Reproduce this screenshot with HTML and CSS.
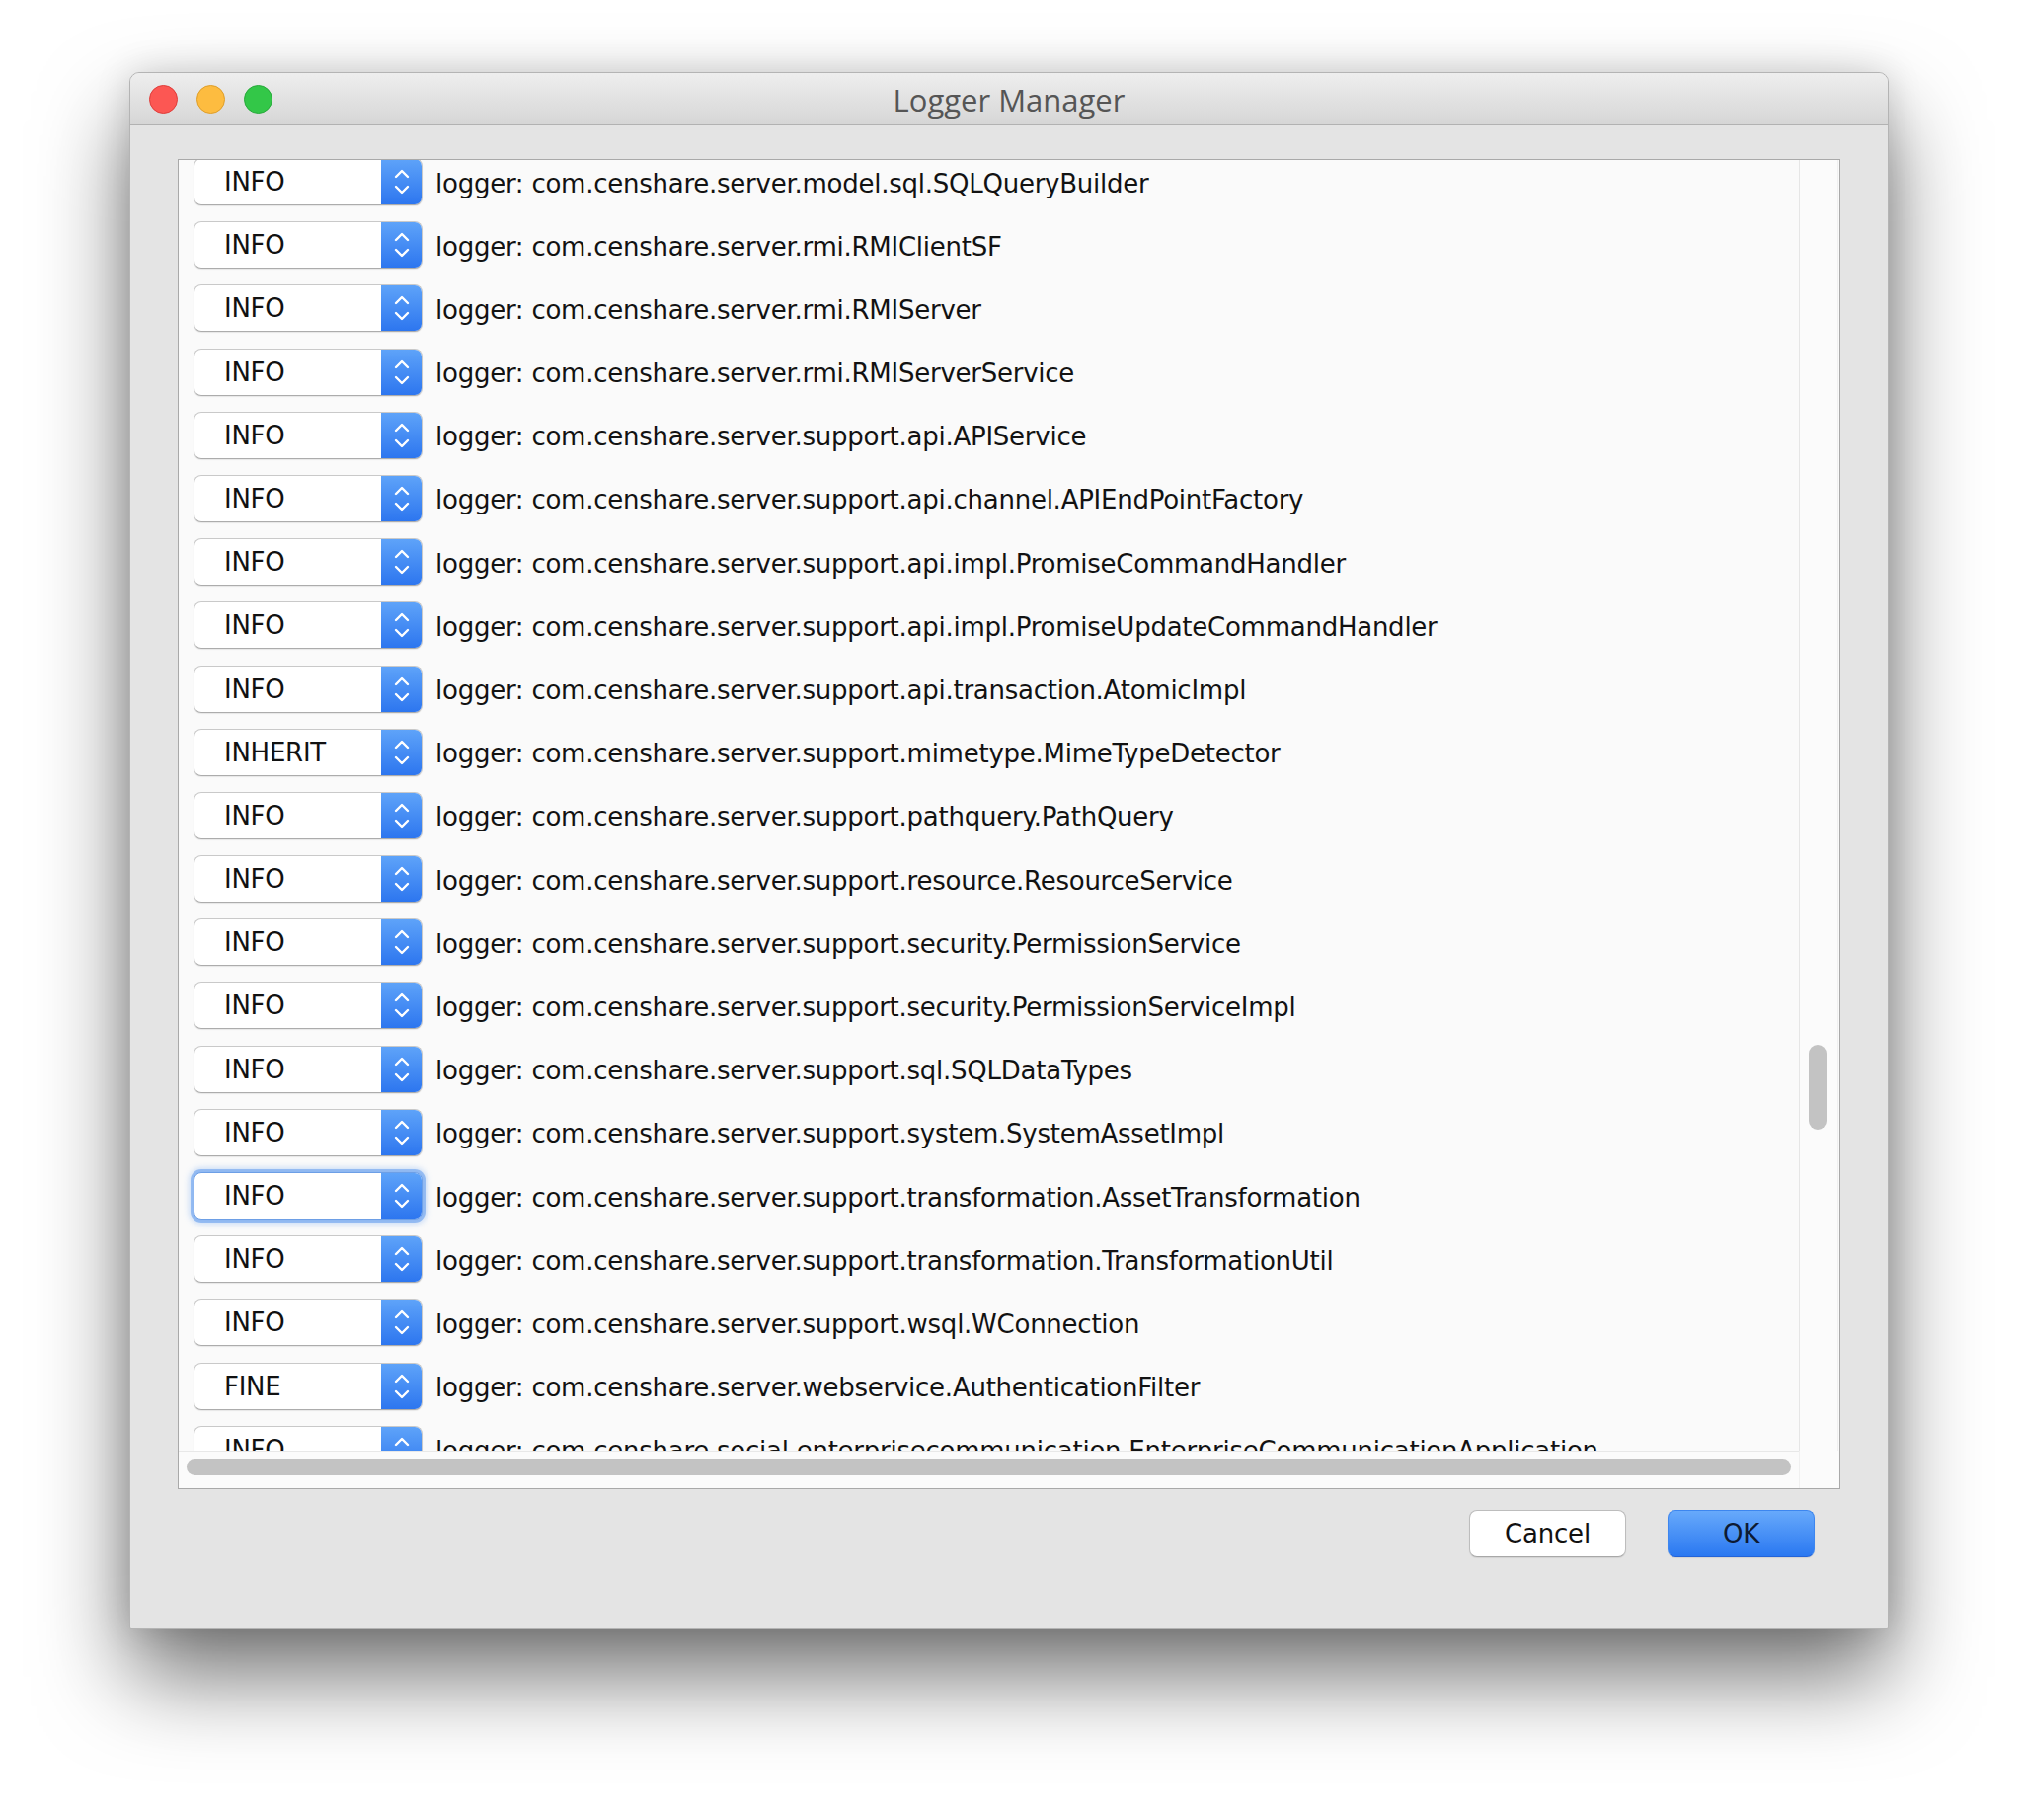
FILE: index.html
```html
<!DOCTYPE html>
<html>
<head>
<title>Logger Manager</title>
<link rel="stylesheet" href="styles.css">
</head>
<body>

<div class="window">
  <div class="titlebar">
    <div class="lights">
      <span class="light red"></span>
      <span class="light yellow"></span>
      <span class="light green"></span>
    </div>
    <div class="title">Logger Manager</div>
  </div>

  <div class="content">
    <div class="pane">
      <div class="viewport">
        <div class="list">
          <div class="row"><div class="combo"><span class="level">INFO</span><span class="arrows"><svg width="16" height="30" viewBox="0 0 16 30"><path d="M2 10 L8 4 L14 10 M2 20 L8 26 L14 20"/></svg></span></div><span class="name">logger: com.censhare.server.model.sql.SQLQueryBuilder</span></div>
          <div class="row"><div class="combo"><span class="level">INFO</span><span class="arrows"><svg width="16" height="30" viewBox="0 0 16 30"><path d="M2 10 L8 4 L14 10 M2 20 L8 26 L14 20"/></svg></span></div><span class="name">logger: com.censhare.server.rmi.RMIClientSF</span></div>
          <div class="row"><div class="combo"><span class="level">INFO</span><span class="arrows"><svg width="16" height="30" viewBox="0 0 16 30"><path d="M2 10 L8 4 L14 10 M2 20 L8 26 L14 20"/></svg></span></div><span class="name">logger: com.censhare.server.rmi.RMIServer</span></div>
          <div class="row"><div class="combo"><span class="level">INFO</span><span class="arrows"><svg width="16" height="30" viewBox="0 0 16 30"><path d="M2 10 L8 4 L14 10 M2 20 L8 26 L14 20"/></svg></span></div><span class="name">logger: com.censhare.server.rmi.RMIServerService</span></div>
          <div class="row"><div class="combo"><span class="level">INFO</span><span class="arrows"><svg width="16" height="30" viewBox="0 0 16 30"><path d="M2 10 L8 4 L14 10 M2 20 L8 26 L14 20"/></svg></span></div><span class="name">logger: com.censhare.server.support.api.APIService</span></div>
          <div class="row"><div class="combo"><span class="level">INFO</span><span class="arrows"><svg width="16" height="30" viewBox="0 0 16 30"><path d="M2 10 L8 4 L14 10 M2 20 L8 26 L14 20"/></svg></span></div><span class="name">logger: com.censhare.server.support.api.channel.APIEndPointFactory</span></div>
          <div class="row"><div class="combo"><span class="level">INFO</span><span class="arrows"><svg width="16" height="30" viewBox="0 0 16 30"><path d="M2 10 L8 4 L14 10 M2 20 L8 26 L14 20"/></svg></span></div><span class="name">logger: com.censhare.server.support.api.impl.PromiseCommandHandler</span></div>
          <div class="row"><div class="combo"><span class="level">INFO</span><span class="arrows"><svg width="16" height="30" viewBox="0 0 16 30"><path d="M2 10 L8 4 L14 10 M2 20 L8 26 L14 20"/></svg></span></div><span class="name">logger: com.censhare.server.support.api.impl.PromiseUpdateCommandHandler</span></div>
          <div class="row"><div class="combo"><span class="level">INFO</span><span class="arrows"><svg width="16" height="30" viewBox="0 0 16 30"><path d="M2 10 L8 4 L14 10 M2 20 L8 26 L14 20"/></svg></span></div><span class="name">logger: com.censhare.server.support.api.transaction.AtomicImpl</span></div>
          <div class="row"><div class="combo"><span class="level">INHERIT</span><span class="arrows"><svg width="16" height="30" viewBox="0 0 16 30"><path d="M2 10 L8 4 L14 10 M2 20 L8 26 L14 20"/></svg></span></div><span class="name">logger: com.censhare.server.support.mimetype.MimeTypeDetector</span></div>
          <div class="row"><div class="combo"><span class="level">INFO</span><span class="arrows"><svg width="16" height="30" viewBox="0 0 16 30"><path d="M2 10 L8 4 L14 10 M2 20 L8 26 L14 20"/></svg></span></div><span class="name">logger: com.censhare.server.support.pathquery.PathQuery</span></div>
          <div class="row"><div class="combo"><span class="level">INFO</span><span class="arrows"><svg width="16" height="30" viewBox="0 0 16 30"><path d="M2 10 L8 4 L14 10 M2 20 L8 26 L14 20"/></svg></span></div><span class="name">logger: com.censhare.server.support.resource.ResourceService</span></div>
          <div class="row"><div class="combo"><span class="level">INFO</span><span class="arrows"><svg width="16" height="30" viewBox="0 0 16 30"><path d="M2 10 L8 4 L14 10 M2 20 L8 26 L14 20"/></svg></span></div><span class="name">logger: com.censhare.server.support.security.PermissionService</span></div>
          <div class="row"><div class="combo"><span class="level">INFO</span><span class="arrows"><svg width="16" height="30" viewBox="0 0 16 30"><path d="M2 10 L8 4 L14 10 M2 20 L8 26 L14 20"/></svg></span></div><span class="name">logger: com.censhare.server.support.security.PermissionServiceImpl</span></div>
          <div class="row"><div class="combo"><span class="level">INFO</span><span class="arrows"><svg width="16" height="30" viewBox="0 0 16 30"><path d="M2 10 L8 4 L14 10 M2 20 L8 26 L14 20"/></svg></span></div><span class="name">logger: com.censhare.server.support.sql.SQLDataTypes</span></div>
          <div class="row"><div class="combo"><span class="level">INFO</span><span class="arrows"><svg width="16" height="30" viewBox="0 0 16 30"><path d="M2 10 L8 4 L14 10 M2 20 L8 26 L14 20"/></svg></span></div><span class="name">logger: com.censhare.server.support.system.SystemAssetImpl</span></div>
          <div class="row"><div class="combo focused"><span class="level">INFO</span><span class="arrows"><svg width="16" height="30" viewBox="0 0 16 30"><path d="M2 10 L8 4 L14 10 M2 20 L8 26 L14 20"/></svg></span></div><span class="name">logger: com.censhare.server.support.transformation.AssetTransformation</span></div>
          <div class="row"><div class="combo"><span class="level">INFO</span><span class="arrows"><svg width="16" height="30" viewBox="0 0 16 30"><path d="M2 10 L8 4 L14 10 M2 20 L8 26 L14 20"/></svg></span></div><span class="name">logger: com.censhare.server.support.transformation.TransformationUtil</span></div>
          <div class="row"><div class="combo"><span class="level">INFO</span><span class="arrows"><svg width="16" height="30" viewBox="0 0 16 30"><path d="M2 10 L8 4 L14 10 M2 20 L8 26 L14 20"/></svg></span></div><span class="name">logger: com.censhare.server.support.wsql.WConnection</span></div>
          <div class="row"><div class="combo"><span class="level">FINE</span><span class="arrows"><svg width="16" height="30" viewBox="0 0 16 30"><path d="M2 10 L8 4 L14 10 M2 20 L8 26 L14 20"/></svg></span></div><span class="name">logger: com.censhare.server.webservice.AuthenticationFilter</span></div>
          <div class="row"><div class="combo"><span class="level">INFO</span><span class="arrows"><svg width="16" height="30" viewBox="0 0 16 30"><path d="M2 10 L8 4 L14 10 M2 20 L8 26 L14 20"/></svg></span></div><span class="name">logger: com.censhare.social.enterprisecommunication.EnterpriseCommunicationApplication</span></div>
        </div>
      </div>
      <div class="vtrack"><div class="vthumb"></div></div>
      <div class="htrack"><div class="hthumb"></div></div>
      <div class="corner"></div>
    </div>

    <div class="buttons">
      <button class="btn">Cancel</button>
      <button class="btn default">OK</button>
    </div>
  </div>
</div>

</body>
</html>
```

FILE: styles.css
```css
* {
  box-sizing: border-box;
}

body {
  margin: 0;
  padding: 73px 0 0 131px;
  background-color: #fff;
  font-family: "DejaVu Sans", Verdana, sans-serif;
  height: 1843px;
  overflow: hidden;
}

.window {
  width: 1782px;
  height: 1577px;
  background-color: #e4e4e4;
  border: 1px solid #b4b4b4;
  border-radius: 10px 10px 2px 2px;
  box-shadow: 0 48px 90px rgba(0, 0, 0, 0.55), 0 0 36px rgba(0, 0, 0, 0.14);
}

.titlebar {
  position: relative;
  height: 53px;
  display: flex;
  align-items: center;
  justify-content: center;
  background: linear-gradient(#eeeeee, #d6d6d6);
  border-bottom: 1px solid #b2b2b2;
  border-radius: 9px 9px 0 0;
}

.lights {
  position: absolute;
  left: 19px;
  top: 12px;
  display: flex;
  gap: 19px;
}

.light {
  width: 29px;
  height: 29px;
  border-radius: 50%;
}

.red {
  background-color: #fc5753;
  border: 1px solid #df3d3a;
}

.yellow {
  background-color: #fdbc40;
  border: 1px solid #de9e2a;
}

.green {
  background-color: #33c748;
  border: 1px solid #27a93a;
}

.title {
  font-family: "Open Sans", "DejaVu Sans", sans-serif;
  font-size: 31px;
  color: #555;
  margin-top: 2px;
}

.content {
  padding: 34px 48px 0 48px;
}

.pane {
  height: 1347px;
  border: 1px solid #a9a9a9;
  background-color: #fafafa;
  display: grid;
  grid-template-columns: 1641px 40px;
  grid-template-rows: 1307px 38px;
}

.viewport {
  overflow: hidden;
  padding-left: 15px;
}

.list {
  margin-top: -2px;
}

.row {
  display: flex;
  align-items: center;
  height: 48px;
  margin-bottom: 16.2px;
  white-space: nowrap;
}

.combo {
  width: 232px;
  height: 48px;
  display: flex;
  flex-shrink: 0;
  background-color: #fff;
  border: 1px solid #c9c9c9;
  border-bottom-color: #acacac;
  border-radius: 8px;
  box-shadow: 0 1px 1px rgba(0, 0, 0, 0.08);
  overflow: hidden;
}

.combo.focused {
  border-color: #6d9fe6;
  box-shadow: 0 0 0 3px rgba(105, 160, 238, 0.6), 0 0 6px 4px rgba(110, 165, 240, 0.4);
}

.level {
  flex: 1;
  display: flex;
  align-items: center;
  padding-left: 30px;
  font-size: 26px;
  letter-spacing: -0.25px;
  color: #111;
}

.arrows {
  width: 41px;
  display: flex;
  align-items: center;
  justify-content: center;
  background: linear-gradient(#5ea3f9, #2d76ef);
}

.arrows path {
  fill: none;
  stroke: #fff;
  stroke-width: 2.4;
  stroke-linecap: round;
  stroke-linejoin: round;
}

.name {
  margin-left: 13px;
  padding-top: 3px;
  font-size: 26px;
  letter-spacing: -0.25px;
  color: #121212;
}

.vtrack {
  border-left: 1px solid #e6e6e6;
  border-right: 1px solid #f0f0f0;
  background-color: #fbfbfb;
  padding: 896px 0 0 9px;
}

.vthumb {
  width: 18px;
  height: 86px;
  border-radius: 9px;
  background-color: #c3c3c3;
}

.htrack {
  border-top: 1px solid #e8e8e8;
  background-color: #fbfbfb;
  padding: 7px 0 0 8px;
}

.hthumb {
  width: 1625px;
  height: 17px;
  border-radius: 9px;
  background-color: #c3c3c3;
}

.corner {
  background-color: #fbfbfb;
  border-left: 1px solid #f0f0f0;
}

.buttons {
  display: flex;
  justify-content: flex-end;
  gap: 42px;
  margin-top: 21px;
  padding-right: 26px;
}

.btn {
  width: 159px;
  height: 48px;
  font-family: "DejaVu Sans", Verdana, sans-serif;
  font-size: 26px;
  letter-spacing: -0.2px;
  color: #111;
  background-color: #fff;
  border: 1px solid #bdbdbd;
  border-bottom-color: #a8a8a8;
  border-radius: 8px;
  box-shadow: 0 1px 1px rgba(0, 0, 0, 0.08);
  padding: 0;
}

.btn.default {
  width: 149px;
  color: #0d1a33;
  background: linear-gradient(#67a9fb, #2a78f1);
  border-color: #3d86ef;
  border-bottom-color: #2363d8;
}
```
